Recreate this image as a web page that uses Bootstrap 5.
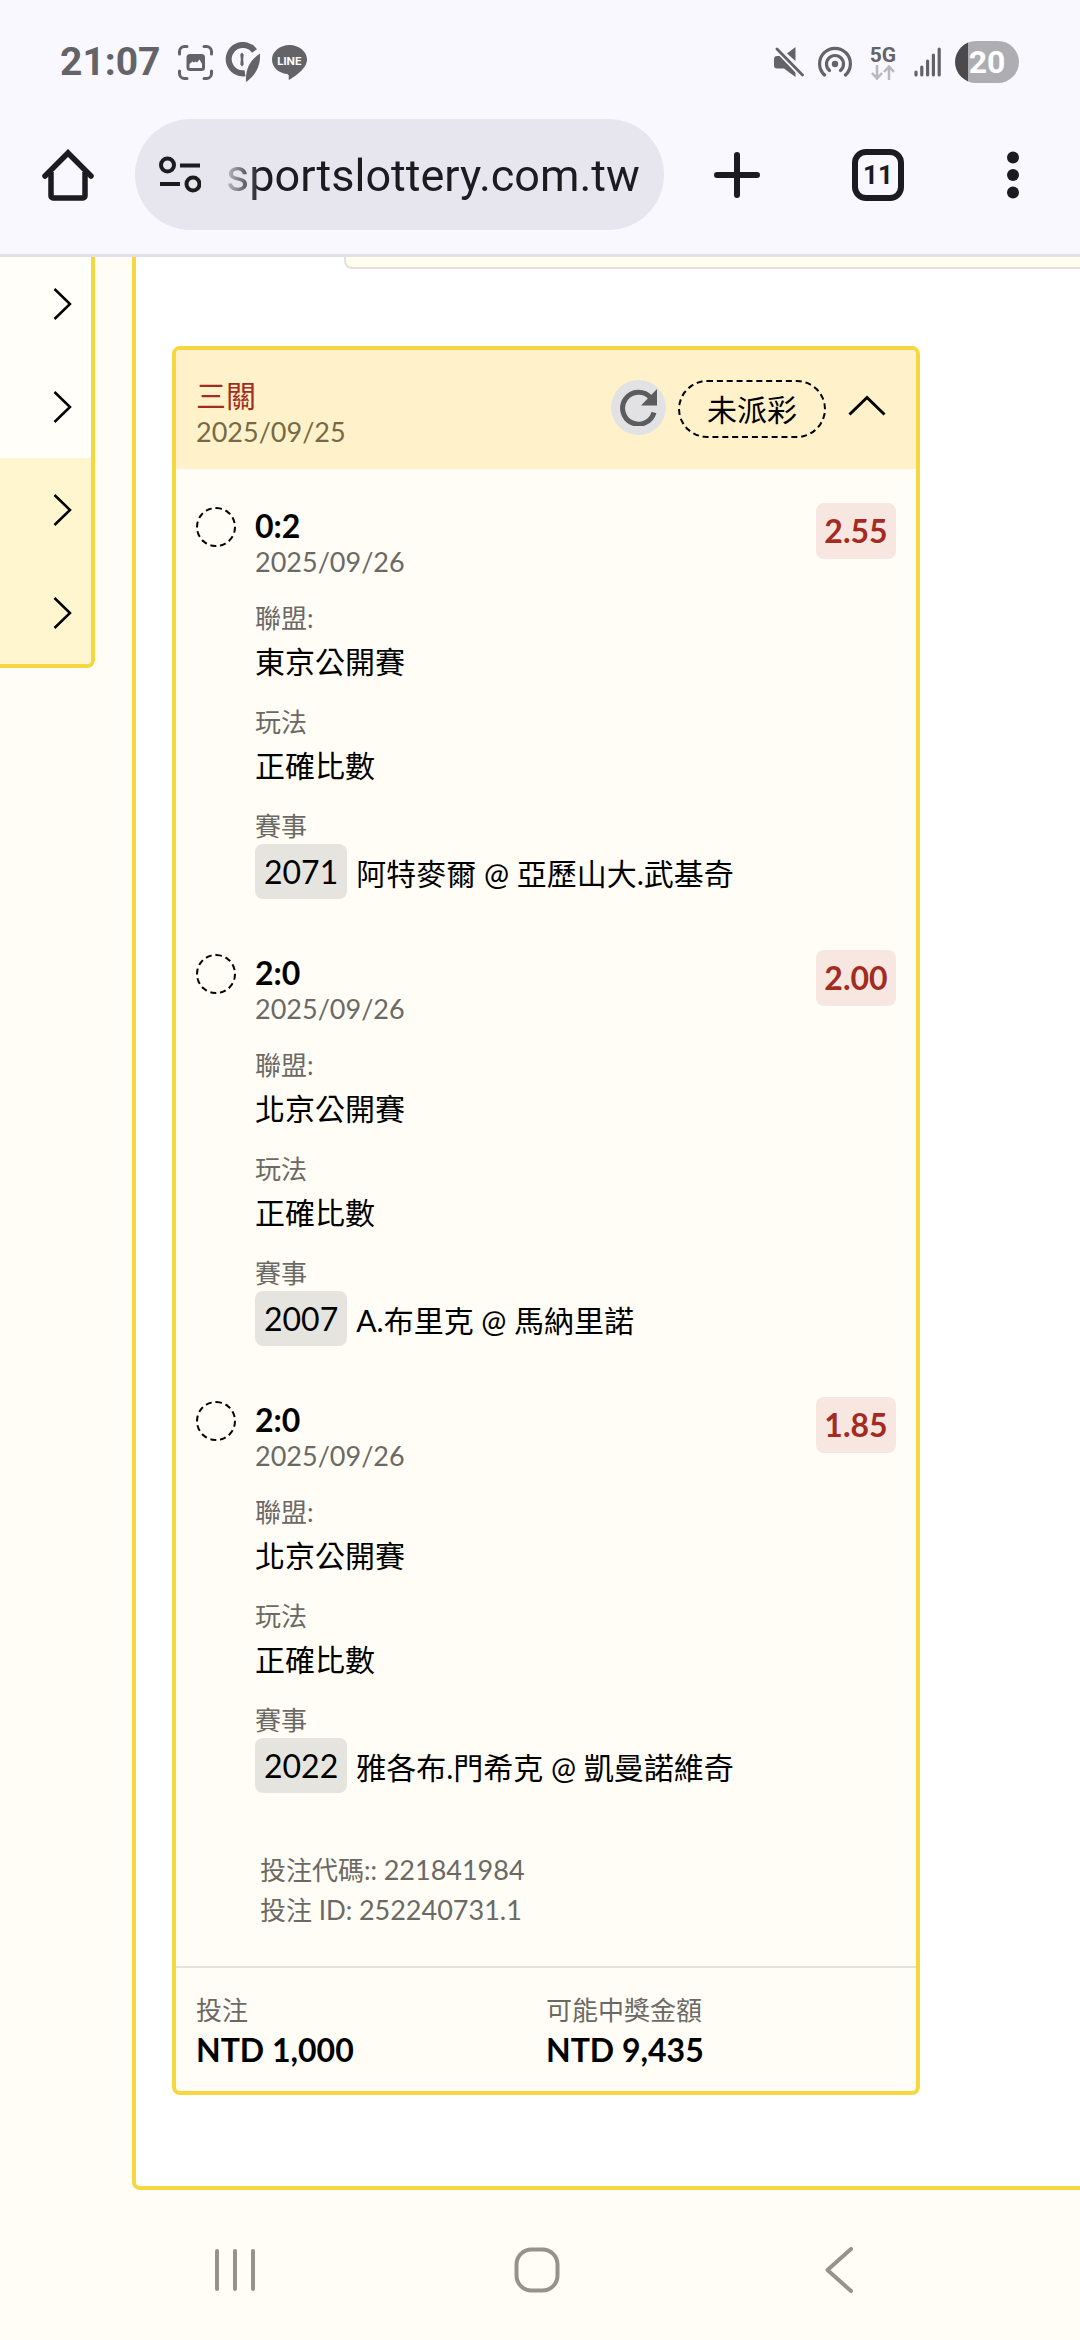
<!DOCTYPE html>
<html lang="zh-Hant">
<head>
<meta charset="utf-8">
<meta name="viewport" content="width=device-width, initial-scale=1">
<title>投注紀錄</title>
<link rel="stylesheet" href="https://cdn.jsdelivr.net/npm/bootstrap@5.3.0/dist/css/bootstrap.min.css">
<style>
:root{--gold:#f7d740;--ivory:#fffdf5;--muted:#6b6965;--ink:#1b1b20;--line:#e4e2da}
body{background:var(--ivory);color:#000;font-family:Lato,"Noto Sans CJK TC",sans-serif;font-size:30px;line-height:44px;overflow-x:hidden}
svg{display:block;flex:none}
.chrome-top{background:#f9f8ff;border-bottom:3px solid #e1e1e7;font-family:Roboto,sans-serif;color:var(--ink)}
.status-row{height:119px;padding:5px 61px 0 60px;color:#646468}
.status-left{gap:12px}
.status-right{gap:14px}
.clock{font-size:39px;font-weight:700;line-height:44px;width:106px}
.net{width:34px;font-size:21px;line-height:20px;font-weight:700}
.battery{width:64px;height:42px;border-radius:21px;background:linear-gradient(90deg,#4a4a4d 13px,#aeadb2 13px);color:#fff;font-size:32px;line-height:42px;font-weight:700}
.tool-row{padding:0 0 24px 41px}
.omnibox{height:111px;border-radius:56px;background:#e7e5ed;margin-left:40px;padding:0 20px 0 24px;min-width:0}
.omnibox input{border:0;background:none;outline:0;font-size:45px;line-height:56px;height:72px;color:var(--ink);padding:2px 0 0;margin-left:25px;min-width:0;-webkit-mask-image:linear-gradient(90deg,rgba(0,0,0,.2),#000 34px);mask-image:linear-gradient(90deg,rgba(0,0,0,.2),#000 34px)}
.tool-btn,.plain-btn{border:0;background:none;padding:0;color:inherit}
.tool-new{width:146px}.tool-tabs{width:136px}.tool-more{width:134px}
.tab-count{width:52px;height:52px;border:6px solid var(--ink);border-radius:14px;font-size:26px;font-weight:700;line-height:1}
.side-menu{width:95px;margin-top:-5px;border:solid var(--gold);border-width:0 4px 4px 0;border-radius:0 0 8px 0;background:#fffef8}
.side-menu a{height:103px;padding-right:19px;color:#000}
.side-menu .hot{background:#fff6cf}
.side-menu .hot:last-child{border-radius:0 0 4px 0}
.panel{margin-left:37px;border:solid var(--gold);border-width:0 0 4px 4px;border-radius:0 0 0 8px;background:#fff;padding-bottom:91px;min-width:0}
.filter-box{height:12px;margin-left:208px;border:solid var(--line);border-width:0 0 2px 2px;border-radius:0 0 0 8px;background:#fffeef}
.ticket{max-width:748px;margin:77px 0 0 36px;border:4px solid var(--gold);border-radius:8px;background:var(--ivory);overflow:hidden}
.ticket-head{background:#fff2ca;padding:28px 20px 19px}
.kind{color:#a32c20;line-height:34px;padding-bottom:2px}
.date-text{font-size:27px;line-height:36px;color:var(--muted)}
.ticket-head .date-text{color:#756a45}
.head-tools{gap:12px;padding-top:2px}
.reload{width:55px;height:55px;border-radius:50%;background:#e2e2e4}
.state{width:148px;height:58px;border:2px dashed #000;border-radius:29px;line-height:54px}
.fold{margin:15px 10px 0}
.legs{padding:34px 20px 36px}
.leg{margin-bottom:51px}
.leg-info{padding-top:5px;margin-left:19px}
.dot{width:40px;height:40px;border:2px dashed #000;border-radius:50%;margin-top:4px}
.score{font-size:32px;font-weight:700;line-height:36px}
.tag-label{font-size:26px;line-height:36px;color:var(--muted);font-weight:400}
.field{margin-top:21px}
.field:first-of-type{margin-top:20px}
.field dd{margin-top:3px}
.field .match{margin-top:0}
.odds{min-width:80px;height:56px;border-radius:8px;background:#f8e7e1;color:#a32b22;font-weight:700;font-size:32px;line-height:56px;text-align:center}
.code{height:55px;padding:0 9px;border-radius:8px;background:#e6e4df;font-size:32px;line-height:56px}
.versus{margin-left:9px;padding-top:2px}
.refs{margin:57px 0 0 64px;font-size:26px;line-height:40px;color:var(--muted)}
.refs span{font-size:27px}
.totals{border-top:2px solid var(--line);padding:24px 20px 19px}
.amount{font-size:32px;font-weight:700}
.sys-nav{padding:57px 90px 47px 84px;color:#94938e}
</style>
<script src="https://cdn.jsdelivr.net/npm/bootstrap@5.3.0/dist/js/bootstrap.bundle.min.js"></script>
</head>
<body class="d-flex flex-column min-vh-100">
<header class="chrome-top">
  <div class="status-row d-flex align-items-center justify-content-between">
    <div class="status-left d-flex align-items-center">
      <div class="clock">21:07</div>
      <svg width="35" height="35" viewBox="0 0 35 35" fill="none" stroke="currentColor" stroke-width="3" stroke-linecap="round"><path d="M1.500 9V6.500a5 5 0 0 1 5-5H9M26 1.500h2.500a5 5 0 0 1 5 5V9M33.500 26v2.500a5 5 0 0 1-5 5H26M9 33.500H6.500a5 5 0 0 1-5-5V26"/><rect x="8.500" y="9" width="18.500" height="17" rx="3.500" fill="currentColor" stroke="none"/><path d="M11.500 23v-4l3-2.500 1.500 1 1.500-1 1.500 1 2.500-3 2.500 4.500v4z" fill="#f9f8ff" stroke="none"/></svg>
      <svg width="35" height="40" viewBox="0 0 35 40"><path d="M29.500 9A14.200 14.200 0 1 0 20 31.200" fill="none" stroke="currentColor" stroke-width="6"/><path d="M35 11.500C27 17 20 25 21 40C30 34 36 24 35 11.500z" fill="currentColor"/><path d="M17 10.500l1.700 2-.5 5 .5 5-1.700 2-1.700-2 .5-5-.5-5z" fill="currentColor"/></svg>
      <svg width="35" height="35" viewBox="0 0 35 35"><path d="M17.500 0C27 0 35 6.500 35 14.500c0 9-12 17-18 20.500-1-2 1-5-2-6C6 28 0 22 0 14.500 0 6.500 8 0 17.500 0z" fill="currentColor"/><text x="17.500" y="19.500" font-family="Inter,sans-serif" font-weight="700" font-size="11" fill="#fff" text-anchor="middle">LINE</text></svg>
    </div>
    <div class="status-right d-flex align-items-center">
      <svg width="30" height="30" viewBox="0 0 30 30"><path d="M21.500 0v14L13 6.500zM3 9h4l14.500 14v7L10 21.500H3a3 3 0 0 1-3-3V12a3 3 0 0 1 3-3z" fill="currentColor"/><path d="M3 2l25 26" stroke="#f9f8ff" stroke-width="6"/><path d="M3 2l25.500 26" stroke="currentColor" stroke-width="2.800" stroke-linecap="round"/></svg>
      <svg width="34" height="32" viewBox="0 0 34 32" fill="none" stroke="currentColor" stroke-width="3.200" stroke-linecap="round"><path d="M6.500 29A15.400 15.400 0 1 1 27.500 29"/><path d="M11.500 24.500A8.500 8.500 0 1 1 22.500 24.500"/><circle cx="17" cy="18" r="3.200" fill="currentColor" stroke="none"/></svg>
      <div class="net d-flex flex-column align-items-center"><span>5G</span><svg width="24" height="15" viewBox="0 0 24 15" fill="none" stroke="#b9b8bf" stroke-width="2.500"><path d="M6 0v13M1 8l5 5.500L11 8M18 15V2M13 7l5-5.500L23 7"/></svg></div>
      <svg width="27" height="30" viewBox="0 0 27 30" stroke="currentColor" stroke-width="3.200" stroke-linecap="round"><path d="M2 25v3M7.800 20v8M13.600 14v14M19.400 8v20M25.200 2v26"/></svg>
      <div class="battery text-center">20</div>
    </div>
  </div>
  <div class="tool-row d-flex align-items-center">
    <button class="tool-btn flex-shrink-0" aria-label="首頁"><svg width="54" height="54" viewBox="0 0 54 54" fill="none" stroke="currentColor" stroke-width="5.500" stroke-linejoin="round"><path d="M4 28L27 5l23 23" stroke-linecap="round" stroke-linejoin="miter"/><path d="M10 24v24a2 2 0 0 0 2 2h30a2 2 0 0 0 2-2V24"/></svg></button>
    <div class="omnibox d-flex align-items-center flex-grow-1">
      <svg width="42" height="38" viewBox="0 0 42 38" fill="none" stroke="currentColor" stroke-width="4"><circle cx="8.500" cy="9" r="6.500"/><path d="M21 9.500h20M1 28h20"/><circle cx="34" cy="28" r="6.500"/></svg>
      <input class="flex-grow-1 w-100" type="text" aria-label="網址" value="sportslottery.com.tw">
    </div>
    <button class="tool-btn tool-new flex-shrink-0 d-flex justify-content-center" aria-label="新分頁"><svg width="46" height="46" viewBox="0 0 46 46" stroke="currentColor" stroke-width="6" stroke-linecap="round"><path d="M23 3v40M3 23h40"/></svg></button>
    <button class="tool-btn tool-tabs flex-shrink-0 d-flex justify-content-center" aria-label="分頁"><span class="tab-count d-flex align-items-center justify-content-center">11</span></button>
    <button class="tool-btn tool-more flex-shrink-0 d-flex justify-content-center" aria-label="更多"><svg width="12" height="48" viewBox="0 0 12 48" fill="currentColor"><circle cx="6" cy="6.500" r="6"/><circle cx="6" cy="24" r="6"/><circle cx="6" cy="41.500" r="6"/></svg></button>
  </div>
</header>

<main class="d-flex align-items-start flex-grow-1 overflow-hidden">
  <nav class="side-menu flex-shrink-0" aria-label="選單">
    <a href="#" class="d-flex align-items-center justify-content-end" aria-label="項目一"><svg width="19" height="32" viewBox="0 0 19 32" fill="none" stroke="currentColor" stroke-width="2.500"><path d="M1.500 1L17 16 1.500 31"/></svg></a>
    <a href="#" class="d-flex align-items-center justify-content-end" aria-label="項目二"><svg width="19" height="32" viewBox="0 0 19 32" fill="none" stroke="currentColor" stroke-width="2.500"><path d="M1.500 1L17 16 1.500 31"/></svg></a>
    <a href="#" class="hot d-flex align-items-center justify-content-end" aria-label="項目三"><svg width="19" height="32" viewBox="0 0 19 32" fill="none" stroke="currentColor" stroke-width="2.500"><path d="M1.500 1L17 16 1.500 31"/></svg></a>
    <a href="#" class="hot d-flex align-items-center justify-content-end" aria-label="項目四"><svg width="19" height="32" viewBox="0 0 19 32" fill="none" stroke="currentColor" stroke-width="2.500"><path d="M1.500 1L17 16 1.500 31"/></svg></a>
  </nav>

  <section class="panel flex-grow-1">
    <div class="filter-box"></div>
    <article class="ticket">
      <div class="ticket-head d-flex justify-content-between align-items-start">
        <div><div class="kind">三關</div><div class="date-text">2025/09/25</div></div>
        <div class="head-tools d-flex align-items-start">
          <button class="plain-btn reload d-flex align-items-center justify-content-center" aria-label="重新整理"><svg width="37" height="37" viewBox="0 0 37 37"><path d="M30.500 8.500A16 16 0 1 0 34 23.500" fill="none" stroke="#5c5c5e" stroke-width="5"/><path d="M37 0v16.500H21z" fill="#5c5c5e"/></svg></button>
          <div class="state text-center">未派彩</div>
          <button class="plain-btn fold" aria-label="收合"><svg width="38" height="21" viewBox="0 0 38 21" fill="none" stroke="#000" stroke-width="3"><path d="M1.500 19.500L19 2.500l17.500 17"/></svg></button>
        </div>
      </div>

      <div class="legs">
        <div class="leg d-flex align-items-start">
          <span class="dot flex-shrink-0"></span>
          <div class="leg-info flex-grow-1">
            <div class="score">0:2</div><div class="date-text">2025/09/26</div>
            <dl class="field mb-0"><dt class="tag-label">聯盟:</dt><dd class="mb-0">東京公開賽</dd></dl>
            <dl class="field mb-0"><dt class="tag-label">玩法</dt><dd class="mb-0">正確比數</dd></dl>
            <dl class="field mb-0"><dt class="tag-label">賽事</dt><dd class="match mb-0 d-flex align-items-center"><span class="code">2071</span><span class="versus">阿特麥爾 @ 亞歷山大.武基奇</span></dd></dl>
          </div>
          <div class="odds">2.55</div>
        </div>
        <div class="leg d-flex align-items-start">
          <span class="dot flex-shrink-0"></span>
          <div class="leg-info flex-grow-1">
            <div class="score">2:0</div><div class="date-text">2025/09/26</div>
            <dl class="field mb-0"><dt class="tag-label">聯盟:</dt><dd class="mb-0">北京公開賽</dd></dl>
            <dl class="field mb-0"><dt class="tag-label">玩法</dt><dd class="mb-0">正確比數</dd></dl>
            <dl class="field mb-0"><dt class="tag-label">賽事</dt><dd class="match mb-0 d-flex align-items-center"><span class="code">2007</span><span class="versus">A.布里克 @ 馬納里諾</span></dd></dl>
          </div>
          <div class="odds">2.00</div>
        </div>
        <div class="leg d-flex align-items-start">
          <span class="dot flex-shrink-0"></span>
          <div class="leg-info flex-grow-1">
            <div class="score">2:0</div><div class="date-text">2025/09/26</div>
            <dl class="field mb-0"><dt class="tag-label">聯盟:</dt><dd class="mb-0">北京公開賽</dd></dl>
            <dl class="field mb-0"><dt class="tag-label">玩法</dt><dd class="mb-0">正確比數</dd></dl>
            <dl class="field mb-0"><dt class="tag-label">賽事</dt><dd class="match mb-0 d-flex align-items-center"><span class="code">2022</span><span class="versus">雅各布.門希克 @ 凱曼諾維奇</span></dd></dl>
          </div>
          <div class="odds">1.85</div>
        </div>
        <div class="refs"><div>投注代碼:: <span>221841984</span></div><div>投注 ID: <span>252240731.1</span></div></div>
      </div>

      <div class="totals"><div class="row g-0">
        <div class="col-6"><div class="tag-label">投注</div><div class="amount">NTD 1,000</div></div>
        <div class="col-6"><div class="tag-label">可能中獎金額</div><div class="amount">NTD 9,435</div></div>
      </div></div>
    </article>
  </section>
</main>

<nav class="sys-nav" aria-label="系統導覽"><div class="row g-0">
  <div class="col-4 d-flex justify-content-center"><button class="plain-btn" aria-label="最近使用"><svg width="42" height="46" viewBox="0 0 42 46" stroke="currentColor" stroke-width="4" stroke-linecap="round"><path d="M3 4v38M21 4v38M39 4v38"/></svg></button></div>
  <div class="col-4 d-flex justify-content-center"><button class="plain-btn" aria-label="主畫面"><svg width="46" height="46" viewBox="0 0 46 46" fill="none" stroke="currentColor" stroke-width="4"><rect x="2.500" y="2.500" width="41" height="41" rx="15"/></svg></button></div>
  <div class="col-4 d-flex justify-content-center"><button class="plain-btn" aria-label="返回"><svg width="28" height="46" viewBox="0 0 28 46" fill="none" stroke="currentColor" stroke-width="4" stroke-linecap="round" stroke-linejoin="round"><path d="M26 2L2.500 23 26 44"/></svg></button></div>
</div></nav>
</body>
</html>
